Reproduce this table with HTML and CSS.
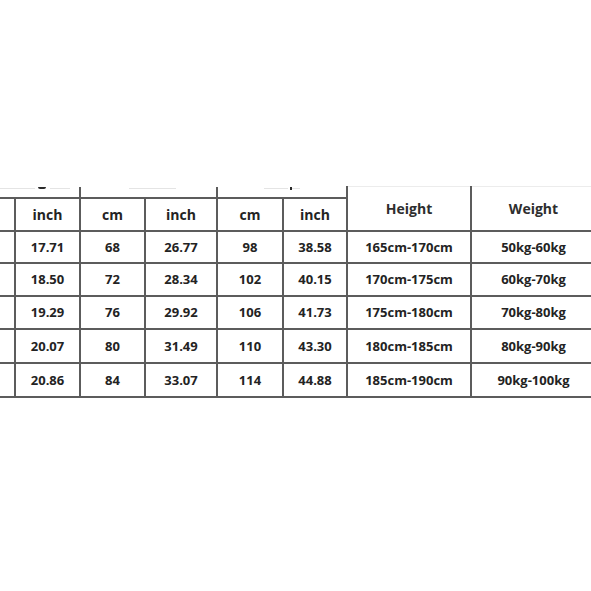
FILE: index.html
```html
<!DOCTYPE html>
<html>
<head>
<meta charset="utf-8">
<link rel="stylesheet" href="styles.css">
</head>
<body>
<div class="page">
  <table class="chart">
    <colgroup>
      <col class="c0"><col class="c1"><col class="c2"><col class="c3"><col class="c4"><col class="c5"><col class="c6"><col class="c7">
    </colgroup>
    <tr class="top">
      <td colspan="2" class="grp">
        <div class="frags">
          <span class="frag light w35"></span>
          <span class="frag dark hook"></span>
          <span class="frag light w20 gap4"></span>
        </div>
      </td>
      <td colspan="2" class="grp">
        <div class="frags">
          <span class="frag light w47 off48"></span>
        </div>
      </td>
      <td colspan="2" class="grp">
        <div class="frags">
          <span class="frag light w24 off46"></span>
          <span class="frag dark tick"></span>
          <span class="frag light w8"></span>
        </div>
      </td>
      <td rowspan="2" class="big">Height</td>
      <td rowspan="2" class="big last">Weight</td>
    </tr>
    <tr class="head">
      <td></td><td>inch</td><td>cm</td><td>inch</td><td>cm</td><td>inch</td>
    </tr>
    <tr class="r1"><td></td><td>17.71</td><td>68</td><td>26.77</td><td>98</td><td>38.58</td><td>165cm-170cm</td><td class="last">50kg-60kg</td></tr>
    <tr class="r2"><td></td><td>18.50</td><td>72</td><td>28.34</td><td>102</td><td>40.15</td><td>170cm-175cm</td><td class="last">60kg-70kg</td></tr>
    <tr class="r3"><td></td><td>19.29</td><td>76</td><td>29.92</td><td>106</td><td>41.73</td><td>175cm-180cm</td><td class="last">70kg-80kg</td></tr>
    <tr class="r4"><td></td><td>20.07</td><td>80</td><td>31.49</td><td>110</td><td>43.30</td><td>180cm-185cm</td><td class="last">80kg-90kg</td></tr>
    <tr class="r5"><td></td><td>20.86</td><td>84</td><td>33.07</td><td>114</td><td>44.88</td><td>185cm-190cm</td><td class="last">90kg-100kg</td></tr>
  </table>
</div>
</body>
</html>
```
FILE: styles.css
```css
html, body {
  margin: 0;
  padding: 0;
  background: #ffffff;
}
.page {
  width: 591px;
  height: 591px;
  overflow: hidden;
  padding-top: 186px;
  box-sizing: border-box;
}
.chart {
  border-collapse: collapse;
  table-layout: fixed;
  width: 595px;
  font-family: "Open Sans", "Noto Sans", sans-serif;
  font-weight: 700;
  font-size: 13px;
  color: #232323;
}
.c0 { width: 15px; }
.c1 { width: 65px; }
.c2 { width: 65px; }
.c3 { width: 72px; }
.c4 { width: 66px; }
.c5 { width: 64px; }
.c6 { width: 124px; }
.c7 { width: 124px; }
.chart td {
  border: 2px solid #5c5c5c;
  text-align: center;
  vertical-align: middle;
  padding: 0;
  height: 31px;
  white-space: nowrap;
  overflow: hidden;
}
.chart tr td:first-child {
  border-left: none;
}
.chart td.last {
  border-right: none;
}
.chart tr.top td {
  height: 10px;
  border-top: none;
  vertical-align: top;
}
.chart tr.top td.big {
  border-top: 1px solid #ececec;
  padding-top: 12px;
  font-size: 14px;
  color: #2e2e2e;
}
.chart tr.top td.grp {
  border-bottom: 2px solid #5c5c5c;
}
.chart tr.head td { height: 31px; font-size: 14px; }
.chart tr.r1 td { height: 30px; }
.chart tr.r2 td { height: 31px; }
.chart tr.r3 td { height: 31px; }
.chart tr.r4 td { height: 32px; }
.chart tr.r5 td { height: 32px; }

.frags {
  display: flex;
  align-items: flex-start;
  height: 10px;
}
.frag {
  display: block;
  height: 1px;
}
.frag.light { background: #e4e4e4; margin-top: 1px; }
.frag.dark { background: #2a2a2a; }
.w35 { width: 35px; }
.w20 { width: 20px; }
.w47 { width: 47px; }
.w24 { width: 24px; }
.w8 { width: 8px; }
.gap4 { margin-left: 4px; }
.off48 { margin-left: 48px; }
.off46 { margin-left: 46px; }
.hook {
  width: 8px;
  height: 2px;
  margin-left: 3px;
  border-radius: 0 0 4px 4px;
}
.tick {
  width: 2px;
  height: 3px;
  margin-left: 2px;
}
```
